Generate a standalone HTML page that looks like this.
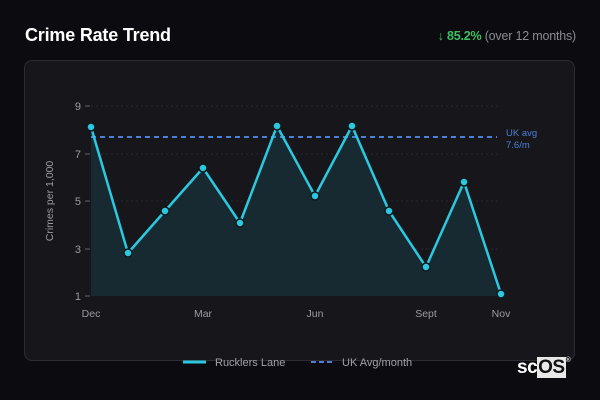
<!DOCTYPE html>
<html><head><meta charset="utf-8"><style>
html,body{margin:0;padding:0;background:#0c0c10;width:600px;height:400px;overflow:hidden;font-family:"Liberation Sans",sans-serif}
.t{position:absolute;left:25px;top:25px;color:#fff;font-weight:bold;font-size:18px;letter-spacing:-0.2px}
.s{position:absolute;right:24px;top:29px;font-size:12.5px;color:#8a8a90;letter-spacing:-0.2px}
.s b{color:#3cc060}
.card{position:absolute;left:24px;top:60px;width:551px;height:301px;background:#17171b;border:1px solid #2c2c32;border-radius:8px;box-sizing:border-box}
svg{position:absolute;left:0;top:0}
.logo{position:absolute;left:517px;top:357px;font-weight:bold;font-size:19px;color:#fff;font-family:"Liberation Sans",sans-serif;letter-spacing:-0.5px}
.logo span{background:#e8e8e8;color:#111;padding:0 1px}
.logo sup{font-size:7px;color:#ccc;position:relative;top:-4px}
</style></head><body>
<div class="t">Crime Rate Trend</div>
<div class="s"><b>↓ 85.2%</b> (over 12 months)</div>
<div class="card"></div>
<svg width="600" height="400" font-family="Liberation Sans, sans-serif">
<g stroke="#2a2a30" stroke-dasharray="2,3" stroke-width="1">
<line x1="91" y1="106" x2="497" y2="106"/><line x1="91" y1="154" x2="497" y2="154"/><line x1="91" y1="201" x2="497" y2="201"/><line x1="91" y1="249" x2="497" y2="249"/>
</g>
<g stroke="#666" stroke-width="1"><line x1="85" y1="106" x2="90" y2="106"/><line x1="85" y1="154" x2="90" y2="154"/><line x1="85" y1="201" x2="90" y2="201"/><line x1="85" y1="249" x2="90" y2="249"/><line x1="85" y1="296" x2="90" y2="296"/></g>
<g fill="#9a9aa0" font-size="11" text-anchor="end"><text x="81" y="110">9</text><text x="81" y="158">7</text><text x="81" y="205">5</text><text x="81" y="253">3</text><text x="81" y="300">1</text></g>
<text transform="translate(53,201) rotate(-90)" fill="#9a9aa0" font-size="10.5" text-anchor="middle">Crimes per 1,000</text>
<g fill="#9a9aa0" font-size="10.5" text-anchor="middle"><text x="91" y="317">Dec</text><text x="203" y="317">Mar</text><text x="315" y="317">Jun</text><text x="426" y="317">Sept</text><text x="501" y="317">Nov</text></g>
<polygon fill="#172a31" points="91,296 91,127 128,253 165,211 203,168 240,223 277,126 315,196 352,126 389,211 426,267 464,182 501,294 501,296"/>
<line x1="91" y1="137" x2="497" y2="137" stroke="#4a80d8" stroke-width="2" stroke-dasharray="5,4"/>
<text x="506" y="136" fill="#4a80d8" font-size="9.5">UK avg</text><text x="506" y="148" fill="#4a80d8" font-size="9.5">7.6/m</text>
<polyline fill="none" stroke="#2cc8e0" stroke-width="2.5" stroke-linejoin="round" points="91,127 128,253 165,211 203,168 240,223 277,126 315,196 352,126 389,211 426,267 464,182 501,294"/>
<g fill="#2cc8e0" stroke="#0e1a1e" stroke-width="1.5">
<circle cx="91" cy="127" r="4"/><circle cx="128" cy="253" r="4"/><circle cx="165" cy="211" r="4"/><circle cx="203" cy="168" r="4"/><circle cx="240" cy="223" r="4"/><circle cx="277" cy="126" r="4"/><circle cx="315" cy="196" r="4"/><circle cx="352" cy="126" r="4"/><circle cx="389" cy="211" r="4"/><circle cx="426" cy="267" r="4"/><circle cx="464" cy="182" r="4"/><circle cx="501" cy="294" r="4"/>
</g>
<line x1="183" y1="362" x2="206" y2="362" stroke="#2cc8e0" stroke-width="3"/>
<text x="215" y="366" fill="#a0a0a6" font-size="11">Rucklers Lane</text>
<line x1="311" y1="362" x2="335" y2="362" stroke="#4a80d8" stroke-width="2" stroke-dasharray="5,3"/>
<text x="342" y="366" fill="#a0a0a6" font-size="11">UK Avg/month</text>
</svg>
<div class="logo">sc<span>OS</span><sup>®</sup></div>
</body></html>
